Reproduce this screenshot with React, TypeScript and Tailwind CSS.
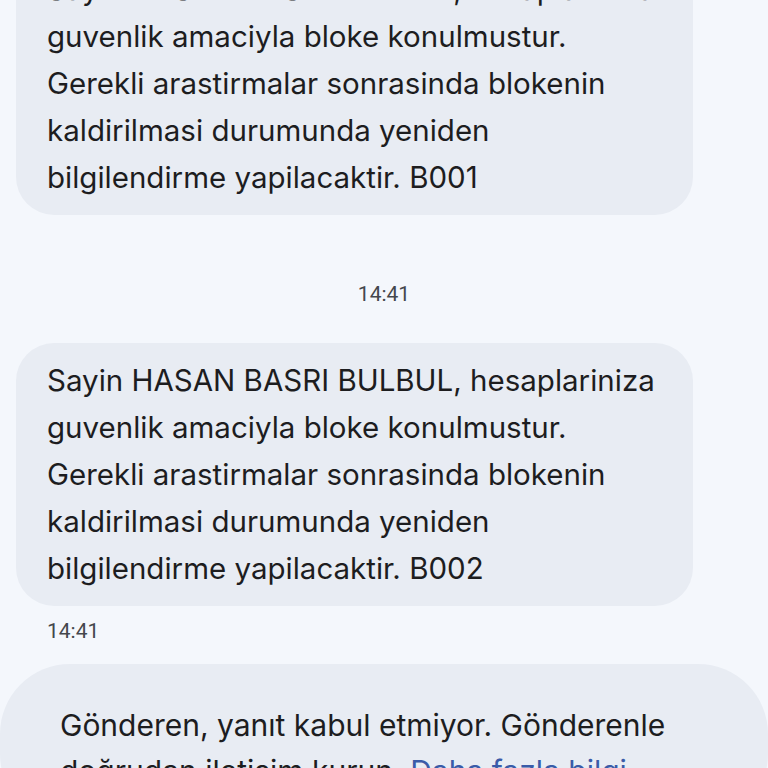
import React from "react";

const bodyFont = { fontFamily: "Inter, Roboto, 'Noto Sans', sans-serif" };
const timeFont = { fontFamily: "Roboto, 'Noto Sans', sans-serif" };

function Lines({ lines }: { lines: React.ReactNode[] }) {
  return (
    <div className="flex flex-col" style={bodyFont}>
      {lines.map((l, i) => (
        <div
          key={i}
          className="h-[47px] leading-[47px] whitespace-nowrap text-[29.5px] text-[#1d1d1f]"
        >
          {l}
        </div>
      ))}
    </div>
  );
}

export default function App() {
  return (
    <div className="h-[768px] w-[768px] overflow-hidden bg-[#f4f7fc]">
      <div className="-mt-[48px] flex flex-col">
        <div className="ml-[16px] w-[677px] rounded-[38px] bg-[#e8ecf3] pl-[31px] pt-[14px] pb-[14px]">
          <Lines
            lines={[
              "Sayin HASAN BASRI BULBUL, hesaplariniza",
              "guvenlik amaciyla bloke konulmustur.",
              "Gerekli arastirmalar sonrasinda blokenin",
              "kaldirilmasi durumunda yeniden",
              "bilgilendirme yapilacaktir. B001",
            ]}
          />
        </div>

        <div
          className="mt-[67px] flex justify-center text-[21px] leading-[24px] text-[#44474c]"
          style={timeFont}
        >
          14:41
        </div>

        <div className="mt-[37px] ml-[16px] w-[677px] rounded-[38px] bg-[#e8ecf3] pl-[31px] pt-[14px] pb-[14px]">
          <Lines
            lines={[
              "Sayin HASAN BASRI BULBUL, hesaplariniza",
              "guvenlik amaciyla bloke konulmustur.",
              "Gerekli arastirmalar sonrasinda blokenin",
              "kaldirilmasi durumunda yeniden",
              "bilgilendirme yapilacaktir. B002",
            ]}
          />
        </div>

        <div
          className="mt-[13px] pl-[47px] text-[21px] leading-[24px] text-[#44474c]"
          style={timeFont}
        >
          14:41
        </div>

        <div
          className="mt-[21px] w-full rounded-[70px] bg-[#e8ecf3] pl-[60px] pt-[38px] pb-[30px]"
          style={bodyFont}
        >
          <div className="flex flex-col">
            <div className="h-[46px] leading-[46px] whitespace-nowrap text-[30px] text-[#1d1d1f]">
              Gönderen, yanıt kabul etmiyor. Gönderenle
            </div>
            <div className="h-[46px] leading-[46px] whitespace-nowrap text-[30px] text-[#1d1d1f]">
              doğrudan iletişim kurun.{" "}
              <span className="text-[#3a5ba8]">Daha fazla bilgi</span>
            </div>
          </div>
        </div>
      </div>
    </div>
  );
}
